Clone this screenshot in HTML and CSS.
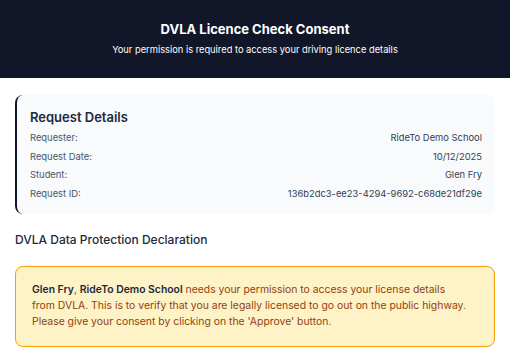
FILE: index.html
```html
<!DOCTYPE html>
<html>
<head>
    <title>DVLA Licence Check Consent</title>
    <link rel="stylesheet" href="styles.css">
</head>
<body>
    <header>
        <h1>DVLA Licence Check Consent</h1>
        <p>Your permission is required to access your driving licence details</p>
    </header>
    <div class="container">
        <div class="details">
            <h2>Request Details</h2>
            <div class="row"><span class="label">Requester:</span><span class="value">RideTo Demo School</span></div>
            <div class="row"><span class="label">Request Date:</span><span class="value">10/12/2025</span></div>
            <div class="row"><span class="label">Student:</span><span class="value">Glen Fry</span></div>
            <div class="row"><span class="label">Request ID:</span><span class="value">136b2dc3-ee23-4294-9692-c68de21df29e</span></div>
        </div>
        <h3>DVLA Data Protection Declaration</h3>
        <div class="notice">
            <strong>Glen Fry</strong>, <strong>RideTo Demo School</strong> needs your permission to access your license details from DVLA. This is to verify that you are legally licensed to go out on the public highway. Please give your consent by clicking on the 'Approve' button.
        </div>
    </div>
</body>
</html>
```
FILE: styles.css
```css
body {
    margin: 0;
    font-family: 'Inter', 'Liberation Sans', sans-serif;
    background: #fff;
    color: #1e293b;
}
header {
    background-color: #111729;
    color: #fff;
    text-align: center;
    padding: 20px 20px 22px;
    height: 36px;
}
header h1 {
    margin: 0;
    font-size: 13px;
    font-weight: 700;
    line-height: 18px;
}
header p {
    margin: 6px 0 0;
    font-size: 9.3px;
    line-height: 12px;
}
.container {
    padding: 17px 15px 0;
}
.details {
    background-color: #f8fafc;
    border-left: 2px solid #0f172a;
    border-radius: 8px;
    padding: 13px 13px 11px 13px;
}
.details h2 {
    margin: 0 0 3px;
    font-size: 13px;
    font-weight: 600;
    line-height: 18px;
    color: #1e293b;
}
.row {
    display: flex;
    justify-content: space-between;
    font-size: 9.4px;
    line-height: 12px;
    padding: 3.25px 0;
    color: #475569;
}
.row .value {
    color: #334155;
}
h3 {
    margin: 19px 0 0;
    font-size: 12px;
    font-weight: 500;
    line-height: 14px;
    color: #1e293b;
}
.notice {
    margin-top: 19px;
    background-color: #fef3c7;
    border: 1px solid #f59e0b;
    border-radius: 8px;
    padding: 15px 25px 16px 16px;
    font-size: 10.4px;
    line-height: 16px;
    color: #92400e;
}
.notice strong {
    color: #1e293b;
    font-weight: 600;
}
```
